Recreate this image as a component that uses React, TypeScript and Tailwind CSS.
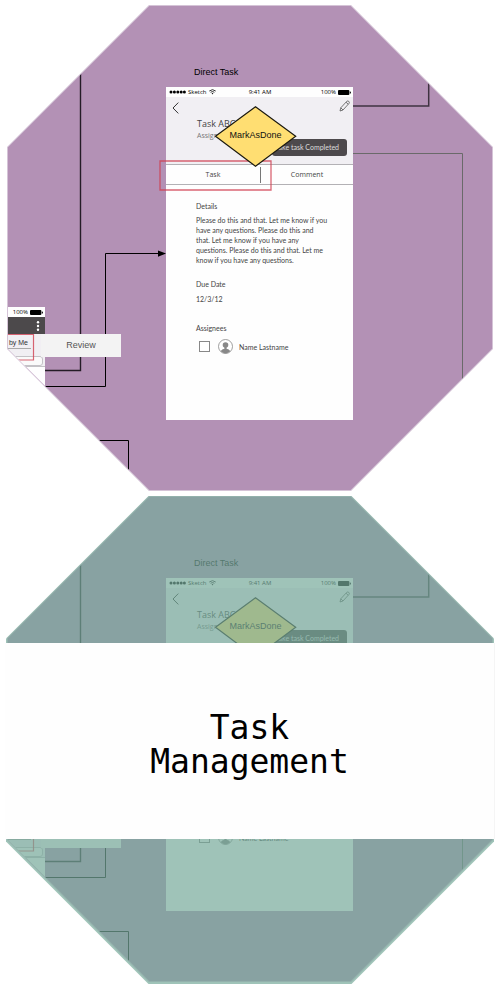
import { useId } from "react";

const octagon =
  "[clip-path:polygon(29.2%_0,70.8%_0,100%_29.2%,100%_70.8%,70.8%_100%,29.2%_100%,0_70.8%,0_29.2%)]";

function Battery() {
  return (
    <svg className="h-[5px] w-[13px]" viewBox="0 0 13 5" aria-hidden="true">
      <rect width="11.4" height="5" rx="1" fill="#000" />
      <rect x="11.9" y="1.5" width="1" height="2" rx=".5" fill="#000" />
    </svg>
  );
}

function StatusBar() {
  return (
    <div className="grid h-[10px] grid-cols-3 items-center bg-[#fefefe] pr-[2px] pl-[3px] font-['Open_Sans',sans-serif] text-[6px] leading-[10px] font-medium text-black">
      <div className="flex items-center gap-[2px]">
        <svg className="h-[4px] w-[17px]" viewBox="0 0 17 4" aria-hidden="true">
          {[2, 5.4, 8.8, 12.2, 15.4].map((x) => (
            <circle key={x} cx={x} cy="2" r="1.5" />
          ))}
        </svg>
        <span>Sketch</span>
        <svg className="h-[6px] w-[7px]" viewBox="0 0 7 6" fill="none" stroke="#222" aria-hidden="true">
          <path d="M.3 2Q3.5-.7 6.7 2M1.6 3.3Q3.5 1.7 5.4 3.3" strokeWidth=".9" />
          <path d="M2.6 4.2Q3.5 3.5 4.4 4.2L3.5 5.4Z" fill="#222" stroke="none" />
        </svg>
      </div>
      <span className="text-center">9:41 AM</span>
      <div className="flex items-center justify-end gap-[2px]">
        <span>100%</span>
        <Battery />
      </div>
    </div>
  );
}

function TaskScreen() {
  const id = useId();
  return (
    <article className="absolute top-[82px] left-[166px] h-[333px] w-[187px] bg-[#fefefe] font-['Lato',sans-serif] text-[7px] leading-[10px] text-[#444]">
      <StatusBar />
      <header className="h-[67px] bg-[#f1eff3]">
        <div className="flex items-start justify-between pt-[3px] pr-[3px] pl-[6px]">
          <button aria-label="Back" className="pt-[2px]">
            <svg className="h-[12px] w-[7px]" viewBox="0 0 7 12" fill="none" stroke="#333">
              <path d="M6.3.6 1 6l5.3 5.4" />
            </svg>
          </button>
          <button aria-label="Edit">
            <svg className="h-[12px] w-[11px]" viewBox="0 0 11 12" fill="none" stroke="#555" strokeWidth=".8">
              <path d="M1 11 1.8 7.8 7.8 1.3Q8.8.5 9.8 1.4T10 3.4L4 10ZM7 2.2 9.2 4.2M1.8 7.8 4 10" />
            </svg>
          </button>
        </div>
        <h2 className="mt-[4px] pl-[31px] font-['Open_Sans',sans-serif] text-[9px] leading-[12px] text-[#444]">Task ABC</h2>
        <p className="pl-[31px] font-['Open_Sans',sans-serif] text-[7px] leading-[12px] text-[#777]">Assigned by</p>
      </header>
      <nav className="flex h-[21px] items-center border-y border-[#b3b1b5] text-center font-['Open_Sans',sans-serif]">
        <button className="h-[16px] w-[95px] border-r border-[#777]">Task</button>
        <button className="h-[16px] flex-1">Comment</button>
      </nav>
      <div className="pt-[16px] pl-[30px]">
        <h3>Details</h3>
        <p className="mt-[4px] whitespace-nowrap">
          Please do this and that. Let me know if you
          <br />
          have any questions. Please do this and
          <br />
          that. Let me know if you have any
          <br />
          questions. Please do this and that. Let me
          <br />
          know if you have any questions.
        </p>
        <h3 className="mt-[14px]">Due Date</h3>
        <p className="mt-[5px]">12/3/12</p>
        <h3 className="mt-[19px]">Assignees</h3>
        <div className="mt-[6px] flex h-[15px] items-center pl-[3px]">
          <input
            id={id}
            type="checkbox"
            className="h-[11px] w-[11px] appearance-none border border-[#888] bg-white"
          />
          <label htmlFor={id} className="flex items-center">
            <svg className="mr-[6px] ml-[8px] h-[15px] w-[15px]" viewBox="0 0 15 15" aria-hidden="true">
              <circle cx="7.5" cy="7.5" r="7" fill="#fff" stroke="#888" strokeWidth=".8" />
              <circle cx="7.5" cy="6" r="2.8" fill="#888" />
              <path d="M2.6 12.3Q4 10 6.4 9.8V8h2.2v1.8Q11 10 12.4 12.3 7.5 16.5 2.6 12.3Z" fill="#888" />
            </svg>
            Name Lastname
          </label>
        </div>
      </div>
    </article>
  );
}

function ListScreen() {
  return (
    <article className="absolute top-[302px] left-[-142px] h-[110px] w-[187px] bg-[#fefefe]">
      <div className="flex h-[10px] items-center justify-end gap-[2px] pr-[2px] font-['Open_Sans',sans-serif] text-[6px] font-medium">
        <span>100%</span>
        <Battery />
      </div>
      <div className="flex h-[17px] items-center justify-end bg-[#4c494b] pr-[5px]">
        <button aria-label="More">
          <svg className="block h-[10px] w-[4px]" viewBox="0 0 4 10" fill="#fff">
            <circle cx="2" cy="1.3" r="1.2" />
            <circle cx="2" cy="5" r="1.2" />
            <circle cx="2" cy="8.7" r="1.2" />
          </svg>
        </button>
      </div>
      <div className="flex h-[33px] flex-col items-end border-b border-[#c4c2c6] bg-[#f1eff3] pt-[3px]">
        <span className="mr-[14px] w-[60px] border-b border-[#aaa] pr-[3px] text-right text-[7px] leading-[11px] text-[#333]">
          by Me
        </span>
        <span className="mt-[7px] mr-[2px] h-[10px] w-[100px] rounded-[3px] border border-[#c4c2c6] bg-[#fafafa]" />
      </div>
    </article>
  );
}

function Diagram() {
  return (
    <div className="absolute top-0 left-1/2 h-[486px] w-[500px] -translate-x-1/2 font-['Liberation_Sans',Arial,sans-serif]">
      <svg className="absolute inset-0 h-[486px] w-[500px]" viewBox="0 5 500 486" fill="none" aria-hidden="true">
        <path d="M80.5 5V370.5H45" stroke="#241c26" strokeWidth="1.4" />
        <path d="M45 386.5H105.5V253.5H160" stroke="#000" />
        <path d="M158 250.5 166 253.5 158 256.8Z" fill="#000" />
        <path d="M60 440.5H128.5V491" stroke="#000" />
        <path d="M353 106H428.7V60" stroke="#3f3341" strokeWidth="1.5" />
        <path d="M353 153.5H462.5V400" stroke="#6a6a6a" />
      </svg>
      <p className="absolute top-[61px] left-[194px] text-[9px] leading-[12px] text-black">Direct Task</p>
      <TaskScreen />
      <button className="absolute top-[134px] left-[272px] h-[17px] w-[75px] rounded-[3px] bg-[#4d494c] pr-[8px] text-right font-['Lato',sans-serif] text-[7px] leading-[17px] whitespace-nowrap text-[#ddd]">
        Make task Completed
      </button>
      <ListScreen />
      <button className="absolute top-[329px] left-[41px] h-[23px] w-[80px] bg-[#f3f3f3] text-[9px] leading-[21px] text-[#555]">
        Review
      </button>
      <svg className="absolute inset-0 h-[486px] w-[500px]" viewBox="0 5 500 486" fill="none" aria-hidden="true">
        <path d="M160 161H271V190H160Z" stroke="#cf3f50" strokeOpacity=".8" strokeWidth="1.3" />
        <path d="M-20 334.5H33.5V360H-20Z" stroke="#cf3f50" strokeOpacity=".8" strokeWidth="1.2" />
        <path d="M215.5 136.3 255.5 106.8 295.7 136.3 255.5 166.3Z" fill="#ffde72" stroke="#1c1a10" strokeWidth="1.2" />
      </svg>
      <p className="absolute top-[124px] left-[215px] w-[81px] text-center text-[9px] leading-[12px] text-[#111]">
        MarkAsDone
      </p>
    </div>
  );
}

function OctagonDiagram() {
  return (
    <div className={`relative h-[486px] bg-[#d5c4d7] ${octagon}`}>
      <div className={`absolute inset-px bg-[#b391b5] ${octagon}`}>
        <div className="absolute inset-x-0 -top-px h-[486px]">
          <Diagram />
        </div>
      </div>
    </div>
  );
}

export default function App() {
  return (
    <main className="flex w-full flex-col gap-[5px] bg-white pt-[5px] pb-[5px]">
      <section className="px-[7px]" aria-label="Task flow">
        <OctagonDiagram />
      </section>
      <section className="relative px-[6px]" aria-label="Task Management">
        <div className={`relative h-[488px] px-px ${octagon}`}>
          <OctagonDiagram />
          <div className="absolute inset-0 bg-[#76aa9a]/70" />
        </div>
        <div className="absolute inset-x-[5px] top-[147px] flex h-[196px] items-center justify-center border-r border-[#f5f5f5] bg-[#fefefe]">
          <h1 className="pt-[8px] text-center font-['DejaVu_Sans_Mono',monospace] text-[33px] leading-[34px] text-black">
            Task
            <br />
            Management
          </h1>
        </div>
      </section>
    </main>
  );
}
